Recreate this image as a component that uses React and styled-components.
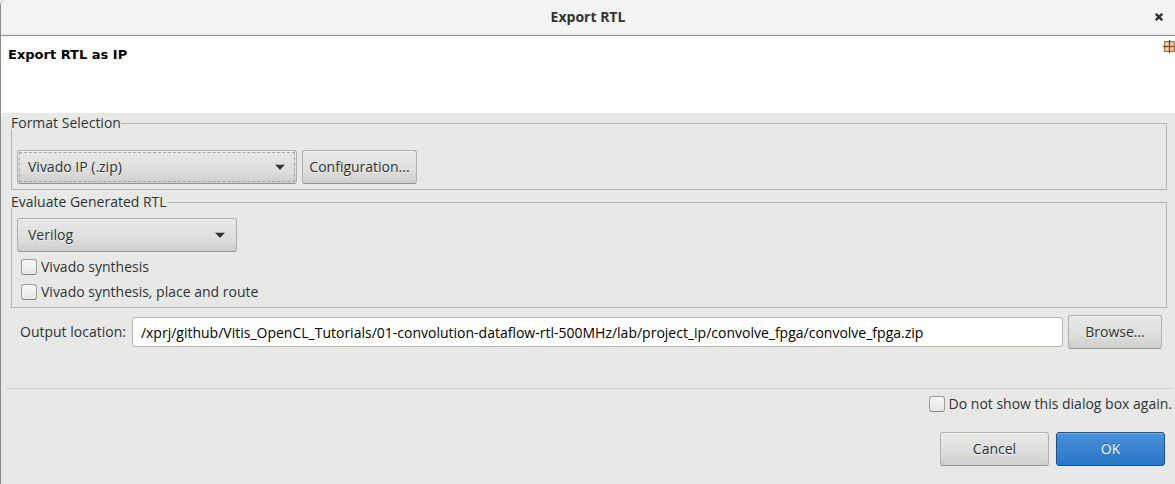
import React from "react";
import styled, { createGlobalStyle } from "styled-components";

const GlobalStyle = createGlobalStyle`
  * { box-sizing: border-box; }
  body {
    margin: 0;
    background: #e8e8e6;
    color: #2e3436;
    font: 14px/20px "Open Sans", "Noto Sans", sans-serif;
  }
  button, input, select { font: inherit; color: inherit; margin: 0; }
`;

const Dialog = styled.main`
  min-height: 100vh;
  display: flex;
  flex-direction: column;
  border-left: 1px solid #8b8b8a;
  border-top-left-radius: 6px;
  background: #e8e8e6;
`;

const TitleBar = styled.header`
  display: grid;
  grid-template-columns: 32px 1fr 32px;
  align-items: center;
  height: 36px;
  padding-bottom: 2px;
  border-bottom: 1px solid #8f8f8e;
  border-top-left-radius: 5px;
  background: #f3f3f3;
  box-shadow: inset 0 -1px #e4e4e4;
`;

const WindowTitle = styled.h1`
  grid-column: 2;
  margin: 0;
  text-align: center;
  font-size: 14px;
  line-height: 20px;
  font-weight: 700;
`;

const CloseButton = styled.button`
  display: flex;
  justify-content: center;
  align-items: center;
  width: 32px;
  height: 32px;
  padding: 0;
  border: 0;
  background: none;
`;

const Banner = styled.section`
  display: flex;
  justify-content: space-between;
  align-items: flex-start;
  height: 77px;
  padding: 4px 0 0 7px;
  background: #fff;
`;

const BannerTitle = styled.h2`
  margin: 5px 0 0;
  color: #000;
  font: 700 13px/20px "DejaVu Sans", sans-serif;
`;

const Content = styled.section`
  display: flex;
  flex-direction: column;
  gap: 6px;
  padding: 4px 8px 0 10px;
`;

const Group = styled.fieldset`
  min-width: 0;
  margin: 0;
  padding: ${(p) => p.$top}px 5px ${(p) => p.$bottom}px;
  border: 1px solid #b3b5b2;
`;

const Legend = styled.legend`
  margin-left: -6px;
  padding: 0;
  line-height: 12px;
`;

const Row = styled.div`
  display: flex;
  align-items: center;
  gap: 5px;
`;

const OutputRow = styled(Row)`
  padding: 1px 5px 0 9px;
`;

const Button = styled.button`
  height: 34px;
  min-width: ${(p) => p.$width}px;
  padding: 0 6px;
  border: 1px solid ${(p) => (p.$primary ? "#1c5187" : "#b0b1ae")};
  border-bottom-color: ${(p) => (p.$primary ? "#1c5187" : "#94958f")};
  border-radius: 3px;
  color: ${(p) => (p.$primary ? "#fff" : "#2e3436")};
  background: ${(p) =>
    p.$primary
      ? "linear-gradient(#4a90d9, #2a76c6)"
      : "linear-gradient(#e8e8e6, #dededc 60%, #cececc)"};
  box-shadow: inset 0 1px ${(p) => (p.$primary ? "#76addf" : "#f3f3f2")};
  text-shadow: ${(p) => (p.$primary ? "0 -1px #1f5c9b" : "0 1px #f0f0ef")};
`;

const SelectFrame = styled.span`
  position: relative;
  display: block;
  width: ${(p) => p.$width}px;
`;

const Select = styled.select`
  display: block;
  width: 100%;
  height: 34px;
  padding: 0 32px 0 10px;
  appearance: none;
  border: 1px solid #b0b1ae;
  border-bottom-color: #94958f;
  border-radius: 3px;
  outline: ${(p) => (p.$focused ? "1px dashed #a5a6a4" : "none")};
  outline-offset: -3px;
  background: linear-gradient(#e8e8e6, #dededc 60%, #cececc);
  box-shadow: inset 0 1px #f3f3f2;
  text-shadow: 0 1px #f0f0ef;
`;

const Arrow = styled.svg`
  position: absolute;
  top: 14px;
  right: 12px;
  pointer-events: none;
`;

const CheckList = styled.div`
  padding: 2px 0 1px;
`;

const CheckLabel = styled.label`
  display: flex;
  align-items: center;
  gap: 4px;
  height: 25px;
  margin-left: 4px;
`;

const Checkbox = styled.input`
  width: 16px;
  height: 16px;
  appearance: none;
  border: 1px solid #9c9e9a;
  border-bottom-color: #83857f;
  border-radius: 3px;
  background: linear-gradient(#f6f6f6, #e8e8e8);
  &:checked { background: #4a90d9; }
`;

const PathInput = styled.input`
  flex: 1;
  min-width: 0;
  height: 30px;
  margin-left: 1px;
  padding: 0 8px;
  border: 1px solid #b3b5b1;
  border-radius: 3px;
  background: #fff;
  color: #000;
`;

const Footer = styled.footer`
  display: flex;
  flex-direction: column;
  align-items: flex-end;
  margin: 39px 3px 0 5px;
  padding: 2px 0 18px;
  border-top: 1px solid #cececc;
`;

const Actions = styled.div`
  display: flex;
  gap: 7px;
  padding: 16px 7px 0 0;
`;

function Dropdown({ label, options, width, focused }) {
  return (
    <SelectFrame $width={width}>
      <Select aria-label={label} $focused={focused}>
        {options.map((o) => <option key={o}>{o}</option>)}
      </Select>
      <Arrow width="10" height="6" viewBox="0 0 10 6" aria-hidden="true">
        <path d="M0 .5Q5 1 10 .5L5.5 5.5h-1z" fill="#2e3436" />
      </Arrow>
    </SelectFrame>
  );
}

function Check({ children }) {
  return (
    <CheckLabel>
      <Checkbox type="checkbox" />
      {children}
    </CheckLabel>
  );
}

function PackageIcon() {
  return (
    <svg width="12" height="13" viewBox="0 0 12 13" aria-hidden="true" shapeRendering="crispEdges">
      <rect x="1" y="1" width="11" height="11" fill="#bd7433" />
      <rect x="2" y="2" width="9" height="9" fill="#dcb086" />
      <path d="M3 3h2v2H3zM8 3h2v2H8zM3 8h2v2H3zM8 8h2v2H8z" fill="#f6e2c0" />
      <path d="M6 0h1v13H6zM0 6h12v1H0z" fill="#85502f" />
      <path d="M6 0h1v2H6zM6 11h1v2H6zM0 6h2v1H0zM6 6h1v1H6z" fill="#4a2c28" />
    </svg>
  );
}

export default function App() {
  return (
    <>
      <GlobalStyle />
      <Dialog>
        <TitleBar>
          <WindowTitle>Export RTL</WindowTitle>
          <CloseButton aria-label="Close">
            <svg width="8" height="8" viewBox="0 0 8 8" aria-hidden="true">
              <path d="M.8.8l6.4 6.4M7.2.8L.8 7.2" stroke="#2e3436" strokeWidth="2.4" />
            </svg>
          </CloseButton>
        </TitleBar>
        <Banner>
          <BannerTitle>Export RTL as IP</BannerTitle>
          <PackageIcon />
        </Banner>
        <Content>
          <Group $top={21} $bottom={5}>
            <Legend>Format Selection</Legend>
            <Row>
              <Dropdown label="Format" width={280} options={["Vivado IP (.zip)"]} focused />
              <Button type="button" $width={115}>Configuration...</Button>
            </Row>
          </Group>
          <Group $top={10} $bottom={2}>
            <Legend>Evaluate Generated RTL</Legend>
            <Dropdown label="Language" width={220} options={["Verilog", "VHDL"]} />
            <CheckList>
              <Check>Vivado synthesis</Check>
              <Check>Vivado synthesis, place and route</Check>
            </CheckList>
          </Group>
          <OutputRow>
            <label htmlFor="output">Output location:</label>
            <PathInput
              id="output"
              defaultValue="/xprj/github/Vitis_OpenCL_Tutorials/01-convolution-dataflow-rtl-500MHz/lab/project_ip/convolve_fpga/convolve_fpga.zip"
            />
            <Button type="button" $width={94}>Browse...</Button>
          </OutputRow>
        </Content>
        <Footer>
          <Check>Do not show this dialog box again.</Check>
          <Actions>
            <Button type="button" $width={109}>Cancel</Button>
            <Button type="submit" $width={109} $primary>OK</Button>
          </Actions>
        </Footer>
      </Dialog>
    </>
  );
}
